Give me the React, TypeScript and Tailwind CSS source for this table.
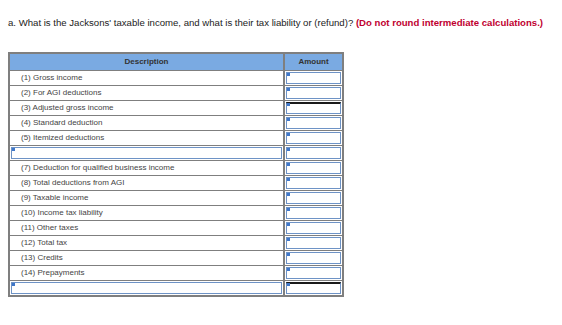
const rows: (string | null)[] = [
  "(1) Gross income",
  "(2) For AGI deductions",
  "(3) Adjusted gross income",
  "(4) Standard deduction",
  "(5) Itemized deductions",
  null,
  "(7) Deduction for qualified business income",
  "(8) Total deductions from AGI",
  "(9) Taxable income",
  "(10) Income tax liability",
  "(11) Other taxes",
  "(12) Total tax",
  "(13) Credits",
  "(14) Prepayments",
  null,
];

function Entry({ thick }: { thick?: boolean }) {
  return (
    <div className="relative h-full p-px">
      <div className={`h-full border border-[#6e93c6] bg-white ${thick ? "border-t-2 border-t-[#1a1a1a]" : ""}`} />
      <span className="absolute left-[2px] top-[2px] h-[3px] w-[3px] bg-[#3f77c9]" />
    </div>
  );
}

export default function App() {
  return (
    <div className="h-[325px] w-[562px] bg-white pl-[8px] pt-[17px] font-['Liberation_Sans',Arial,sans-serif] text-[#222]">
      <p className="whitespace-nowrap text-[9.6px] leading-[12px]">
        a. What is the Jacksons&apos; taxable income, and what is their tax liability or (refund)?{" "}
        <span className="font-bold text-[#c0002f]">(Do not round intermediate calculations.)</span>
      </p>

      <div className="mt-[23px] w-[336px] border-2 border-[#7f7f7f]">
        <div className="grid h-[16px] grid-cols-[275px_1fr] bg-[#7aaae2] text-[8px] font-bold leading-[16px] text-[#333]">
          <div className="border-r-2 border-[#7f7f7f] text-center">Description</div>
          <div className="text-center">Amount</div>
        </div>
        {rows.map((label, i) => (
          <div key={i} className="grid h-[15px] grid-cols-[275px_1fr] border-t border-[#7f7f7f]">
            <div className="border-r-2 border-[#7f7f7f]">
              {label ? (
                <span className="block pl-[11px] text-[8px] leading-[14px] text-[#444]">{label}</span>
              ) : (
                <Entry />
              )}
            </div>
            <Entry thick={i === 2 || i === 14} />
          </div>
        ))}
      </div>
    </div>
  );
}
